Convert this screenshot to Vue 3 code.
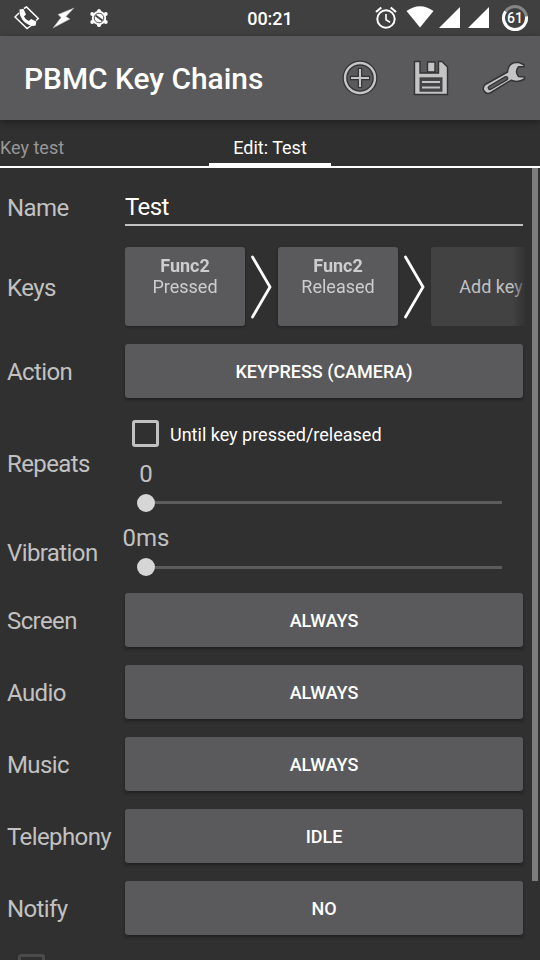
<template>
  <div class="screen">
    <!-- status bar -->
    <div class="status">
      <div class="status-side">
        <svg class="ic-phone" width="26" height="24" viewBox="0 0 26 24">
          <path d="M5 7 L1 11 L13 22.5 L18 19 M10 2.5 L12.5 .9 L24.3 12.5 L22 14.5" fill="none" stroke="#fff" stroke-width="1.5" />
          <path d="M5.5 3.6 L9.4 2.8 L12 8.5 L9.9 10.4 Q11.5 13.6 14.8 15 L17 13 L22.3 15.6 L21.6 19.6 Q16.5 21 11 16.5 Q4.8 11 5.5 3.6Z" fill="#fff" />
        </svg>
        <svg class="ic-bolt" width="24" height="22" viewBox="0 0 24 22">
          <path d="M22 1 L6 7.5 L9 10.5 L1 21 L18 12 L14 9.5 Z" fill="#fff" stroke="#aaa" stroke-width=".6" />
        </svg>
        <svg class="ic-gear" width="20" height="20" viewBox="0 0 20 20">
          <g fill="#fff">
            <circle cx="10" cy="10" r="7.2" />
            <circle cx="10" cy="2.8" r="1.9" /><circle cx="10" cy="17.2" r="1.9" />
            <circle cx="3.2" cy="6" r="1.9" /><circle cx="16.8" cy="6" r="1.9" />
            <circle cx="3.2" cy="14" r="1.9" /><circle cx="16.8" cy="14" r="1.9" />
          </g>
          <circle cx="10" cy="10" r="4.8" fill="none" stroke="#555" stroke-width="1" />
          <path d="M6.5 7.5 L13.5 12.5" stroke="#404040" stroke-width="1.7" />
        </svg>
      </div>
      <span class="clock">00:21</span>
      <div class="status-side">
        <svg class="ic-alarm" width="22" height="24" viewBox="0 0 22 24">
          <g fill="none" stroke="#fff">
            <circle cx="11" cy="13" r="8.7" stroke-width="2" />
            <path d="M11 8 V13.8 L15 16.2" stroke-width="1.6" />
            <path d="M1 6 L6.3 1.5 M15.7 1.5 L21 6" stroke-width="2.2" />
          </g>
        </svg>
        <svg class="ic-wifi" width="28" height="22" viewBox="0 0 28 22">
          <path d="M.5 5 Q14 -4.5 27.5 5 L14 21.5Z" fill="#fff" />
        </svg>
        <svg class="ic-sig" width="21" height="21" viewBox="0 0 21 21"><path d="M0 21 L21 0 V21Z" fill="#fff" /></svg>
        <svg class="ic-sig" width="21" height="21" viewBox="0 0 21 21"><path d="M0 21 L21 0 V21Z" fill="#fff" /></svg>
        <div class="battery">
          <svg width="28" height="28" viewBox="0 0 28 28">
            <circle cx="14" cy="14" r="11.5" fill="none" stroke="#858585" stroke-width="3" />
            <path d="M25.4 12.5 A11.5 11.5 0 1 1 4.5 7.5" fill="none" stroke="#fff" stroke-width="3" />
          </svg>
          <span>61</span>
        </div>
      </div>
    </div>

    <!-- action bar -->
    <header class="bar">
      <h1>PBMC Key Chains</h1>
      <svg class="act" width="36" height="36" viewBox="0 0 36 36">
        <g fill="none" stroke="#333335">
          <circle cx="18" cy="18" r="15" stroke-width="5" />
          <path d="M18 8 V28 M8 18 H28" stroke-width="4.6" />
        </g>
        <g fill="none" stroke="#c4c4c4">
          <circle cx="18" cy="18" r="15" stroke-width="2.4" />
          <path d="M18 9 V27 M9 18 H27" stroke-width="2.1" />
        </g>
      </svg>
      <svg class="act" width="36" height="36" viewBox="0 0 36 36">
        <path d="M1.5 1.5 H7 V13 H25.5 V1.5 H29 L34.5 7 V34.5 H1.5Z" fill="#c4c4c4" stroke="#333335" stroke-width="1.4" />
        <path d="M14.5 2 H22 V12 H14.5Z" fill="#c4c4c4" stroke="#333335" stroke-width="1.4" />
        <rect x="6.5" y="17.3" width="23" height="14.5" fill="#454547" />
        <path d="M9 22 H27 M9 27.5 H27" stroke="#c4c4c4" stroke-width="2.2" />
      </svg>
      <svg class="act" width="44" height="36" viewBox="0 0 44 36">
        <path d="M42 4.8 L37 2.6 Q28 1.5 26 9 L25.5 12 L3.2 24.5 Q0 27.5 2 31 Q4.5 35 9 32.5 L29 20.3 Q36 23 42.5 19 V17 L36.5 16.5 Q32.5 12 36.5 6.8 H42Z" fill="#c4c4c4" stroke="#333335" stroke-width="1.5" stroke-linejoin="round" />
        <path d="M8 27.7 L24 18.4" stroke="#333335" stroke-width="4.8" stroke-linecap="round" />
        <path d="M8 27.7 L24 18.4" stroke="#5a5a5c" stroke-width="2.2" stroke-linecap="round" />
      </svg>
    </header>

    <nav class="tabs">
      <div class="tab">Key test</div>
      <div class="tab active">Edit: Test</div>
    </nav>

    <main class="content">
      <div class="form">
        <div class="row name">
          <label>Name</label>
          <div class="input">Test</div>
        </div>

        <div class="row keys">
          <label>Keys</label>
          <div class="chain">
            <template v-for="k in keys" :key="k.state">
              <div class="key"><b>{{ k.name }}</b><span>{{ k.state }}</span></div>
              <svg class="arrow" width="33" height="64" viewBox="0 0 33 64">
                <path d="M7.5 2 L25 32 L7.5 62" fill="none" stroke="#fff" stroke-width="2.8" stroke-linecap="round" />
              </svg>
            </template>
            <div class="key add">Add key</div>
          </div>
        </div>

        <div class="row">
          <label>Action</label>
          <button class="btn">KEYPRESS (CAMERA)</button>
        </div>

        <div class="row repeats">
          <label>Repeats</label>
          <div class="field">
            <div class="check"><i class="box"></i><span>Until key pressed/released</span></div>
            <div class="value"><span>0</span></div>
            <div class="slider"></div>
          </div>
        </div>

        <div class="row vibration">
          <label>Vibration</label>
          <div class="field">
            <div class="value"><span>0ms</span></div>
            <div class="slider"></div>
          </div>
        </div>

        <div v-for="c in conditions" :key="c.label" class="row">
          <label>{{ c.label }}</label>
          <button class="btn">{{ c.value }}</button>
        </div>

        <i class="box next"></i>
      </div>
      <div class="scrollbar"></div>
    </main>
  </div>
</template>

<script setup>
const keys = [
  { name: 'Func2', state: 'Pressed' },
  { name: 'Func2', state: 'Released' },
]

const conditions = [
  { label: 'Screen', value: 'ALWAYS' },
  { label: 'Audio', value: 'ALWAYS' },
  { label: 'Music', value: 'ALWAYS' },
  { label: 'Telephony', value: 'IDLE' },
  { label: 'Notify', value: 'NO' },
]
</script>

<style>
body {
  margin: 0;
  background: #303030;
}
</style>

<style scoped>
* {
  box-sizing: border-box;
}
svg {
  display: block;
  flex: none;
}
.screen {
  width: 540px;
  height: 960px;
  overflow: hidden;
  display: flex;
  flex-direction: column;
  background: #303030;
  color: #fff;
  font-family: Roboto, sans-serif;
}

.status {
  height: 36px;
  flex: none;
  display: grid;
  grid-template-columns: 1fr auto 1fr;
  background: #404040;
}
.status-side {
  display: flex;
  align-items: flex-start;
}
.clock {
  font-size: 18px;
  line-height: 37px;
  font-weight: 500;
}
.ic-phone { margin: 6px 0 0 14px; }
.ic-bolt { margin: 7px 0 0 12px; }
.ic-gear { margin: 8px 0 0 13px; }
.status-side:last-child { justify-content: flex-end; }
.ic-alarm { margin: 6px 9px 0 0; }
.ic-wifi { margin: 6px 5px 0 0; }
.ic-sig { margin: 7px 8px 0 0; }
.battery {
  margin: 4px 11px 0 4px;
  display: grid;
  place-items: center;
}
.battery > * { grid-area: 1 / 1; }
.battery span {
  font-size: 14px;
  font-weight: 500;
}

.bar {
  height: 84px;
  flex: none;
  display: flex;
  align-items: center;
  padding: 0 14px 0 24px;
  background: #5a5a5c;
  box-shadow: 0 2px 7px rgba(0, 0, 0, 0.4);
  z-index: 1;
}
h1 {
  margin: 0 auto 0 0;
  padding-top: 2px;
  font-size: 29.9px;
  font-weight: 500;
  line-height: 36px;
  white-space: nowrap;
}
.act + .act { margin-left: 35px; }
.act:last-child { margin-left: 33px; }

.tabs {
  height: 48px;
  flex: none;
  display: flex;
  border-bottom: 2px solid #fff;
  font-size: 18px;
  line-height: 55px;
}
.tab {
  width: 209px;
  color: #979797;
}
.tab.active {
  width: 122px;
  height: 48px;
  color: #fff;
  text-align: center;
  border-bottom: 5px solid #fff;
}

.content {
  flex: 1;
  min-height: 0;
  display: flex;
}
.form {
  width: 532px;
  padding: 7px 5px 0 7px;
}
.scrollbar {
  width: 6px;
  height: 713px;
  background: #7d7d7d;
}
.row {
  height: 72px;
  display: flex;
  align-items: center;
}
.row label {
  width: 118px;
  flex: none;
  padding-top: 2px;
  font-size: 24px;
  line-height: 28px;
  letter-spacing: -0.6px;
  color: #c1c1c1;
}
.row.name { height: 64px; }
.input {
  width: 398px;
  height: 38px;
  font-size: 24px;
  line-height: 39px;
  letter-spacing: -0.6px;
  border-bottom: 2px solid #c1c1c1;
}

.row.keys { height: 96px; }
.chain {
  display: flex;
  align-items: center;
  width: 402px;
  height: 89px;
  padding-bottom: 2px;
  overflow: hidden;
  -webkit-mask-image: linear-gradient(90deg, #000 388px, transparent 402px);
  mask-image: linear-gradient(90deg, #000 388px, transparent 402px);
}
.arrow { margin-top: 1px; }
.key {
  width: 120px;
  height: 79px;
  flex: none;
  display: flex;
  flex-direction: column;
  padding-top: 8px;
  text-align: center;
  font-size: 18px;
  line-height: 21px;
  color: #cdcdcd;
  background: #5a5a5c;
  border-radius: 3px;
  box-shadow: 0 1px 3px rgba(0, 0, 0, 0.35);
}
.key.add {
  padding-top: 29px;
  background: #424242;
  color: #c1c1c1;
  box-shadow: none;
}

.btn {
  width: 398px;
  height: 54px;
  padding: 0;
  border: 0;
  border-radius: 3px;
  background: #5a5a5c;
  box-shadow: 0 2px 3px rgba(0, 0, 0, 0.35);
  color: #fff;
  font: 500 18px Roboto, sans-serif;
}

.row.repeats { height: 114px; }
.row.vibration { height: 63px; }
.repeats label,
.vibration label {
  padding-top: 0;
}
.field {
  width: 398px;
  height: 100%;
  display: flex;
  flex-direction: column;
}
.check {
  height: 27px;
  margin: 13px 0 12px 7px;
  display: flex;
  align-items: center;
  gap: 11px;
  font-size: 18px;
}
.check span { padding-top: 2px; }
.box {
  display: block;
  width: 27px;
  height: 27px;
  border: 3px solid #c1c1c1;
  border-radius: 3px;
}
.value {
  width: 42px;
  height: 28px;
  display: flex;
  justify-content: center;
  font-size: 24px;
  line-height: 30px;
  color: #c1c1c1;
}
.vibration .value {
  margin-top: 3px;
  line-height: 29px;
}
.slider {
  height: 18px;
  margin: 7px 21px 0 12px;
  display: flex;
  align-items: center;
}
.slider::before {
  content: '';
  width: 18px;
  height: 18px;
  border-radius: 50%;
  background: #d6d6d6;
}
.slider::after {
  content: '';
  flex: 1;
  height: 3px;
  margin-bottom: 1px;
  background: #5c5c5c;
}
.vibration .slider { margin-top: 6px; }
.vibration .slider::after { margin: 1px 0 0; }
.box.next {
  margin: 10px 0 0 11px;
  border-color: #4b4b4b;
}
</style>
